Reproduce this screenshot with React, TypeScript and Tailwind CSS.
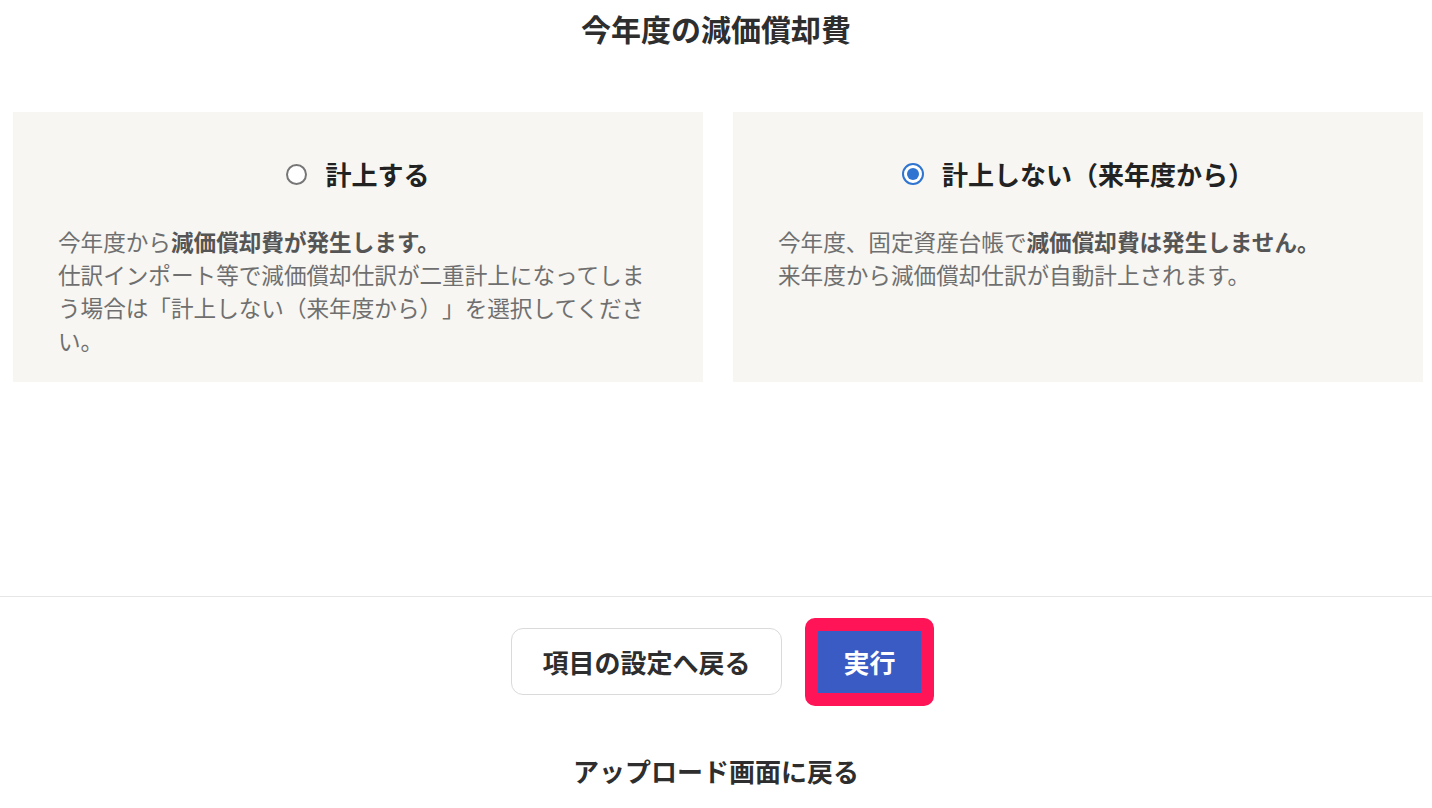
const font = { fontFamily: '"Noto Sans CJK JP", "Noto Sans", sans-serif' };

function Radio({ checked }: { checked: boolean }) {
  return checked ? (
    <span className="flex h-[22px] w-[22px] items-center justify-center rounded-full border-2 border-[#2f74d0] bg-white">
      <span className="h-[12px] w-[12px] rounded-full bg-[#2f74d0]" />
    </span>
  ) : (
    <span className="h-[21px] w-[21px] rounded-full border-2 border-[#767676] bg-white" />
  );
}

function Option({
  label,
  checked,
  children,
}: {
  label: string;
  checked: boolean;
  children: React.ReactNode;
}) {
  return (
    <div className="bg-[#f7f6f2] pt-[44px] pb-[25px] pl-[45px] [text-spacing-trim:space-all]">
      <label className="flex items-center justify-center gap-[18px] pr-[45px]">
        <Radio checked={checked} />
        <span className="text-[26px] leading-[36px] font-bold text-[#222]">{label}</span>
      </label>
      <p className="mt-[33px] w-[596px] text-[22.6px] leading-[33px] text-[#6f6f6f]">{children}</p>
    </div>
  );
}

export default function App() {
  return (
    <div className="min-h-[808px] bg-white" style={font}>
      <div className="h-[597px] border-b border-[#e6e6e6]">
        <h1 className="pt-[8px] text-center text-[30px] leading-[40px] font-bold text-[#2e2e2e]">
          今年度の減価償却費
        </h1>
        <div className="mt-[64px] grid grid-cols-[690px_690px] gap-[30px] pl-[13px]">
          <Option label="計上する" checked={false}>
            今年度から<b className="text-[#555]">減価償却費が発生します。</b>
            <br />
            仕訳インポート等で減価償却仕訳が二重計上になってしまう場合は「計上しない（来年度から）」を選択してください。
          </Option>
          <Option label="計上しない（来年度から）" checked={true}>
            今年度、固定資産台帳で<b className="text-[#555]">減価償却費は発生しません。</b>
            <br />
            来年度から減価償却仕訳が自動計上されます。
          </Option>
        </div>
      </div>

      <div className="flex flex-col items-center pt-[31px]">
        <div className="flex items-center gap-[36px]">
          <button className="h-[67px] w-[271px] rounded-xl border border-[#dadada] bg-white text-[26px] font-bold text-[#2e2e2e]">
            項目の設定へ戻る
          </button>
          <div className="relative">
            {/* highlight frame around the submit button */}
            <span className="absolute -inset-[13px] rounded-[10px] border-[13px] border-[#ff1457]" />
            <button className="relative h-[62px] w-[103px] bg-[#3a5bc4] text-[26px] font-bold text-white">
              実行
            </button>
          </div>
        </div>
        <a className="mt-[58px] text-[26px] leading-[36px] font-bold text-[#2e2e2e]">
          アップロード画面に戻る
        </a>
      </div>
    </div>
  );
}
